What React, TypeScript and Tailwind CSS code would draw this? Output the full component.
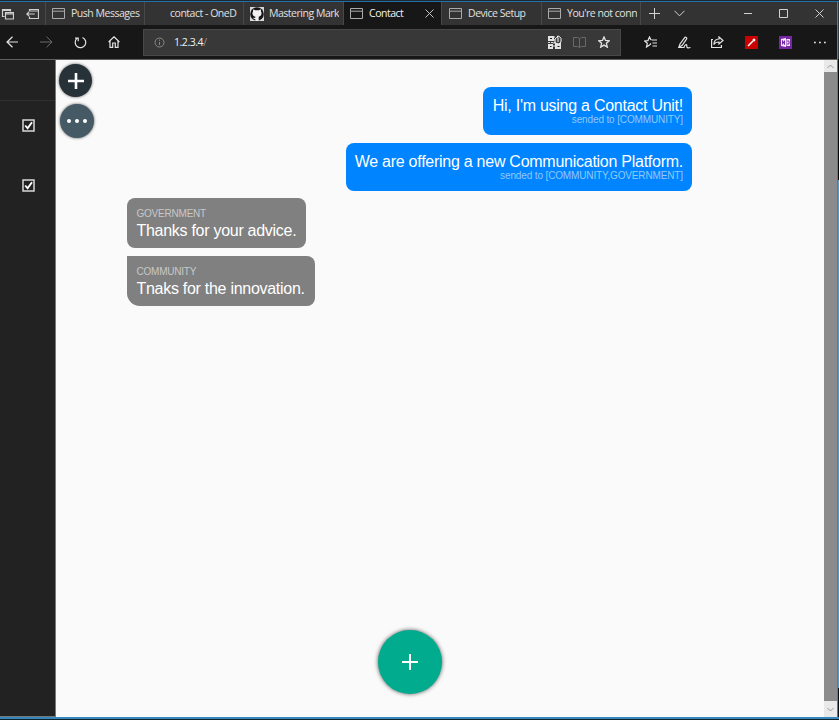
import React from "react";

type P = { className?: string; children: React.ReactNode; w?: number; h?: number; sw?: number };

function Glyph({ className = "", children, w = 16, h = 16, sw = 1 }: P) {
  return (
    <svg
      className={"block shrink-0 " + className}
      width={w}
      height={h}
      viewBox={`0 0 ${w} ${h}`}
      fill="none"
      stroke="currentColor"
      strokeWidth={sw}
    >
      {children}
    </svg>
  );
}

const PageIcon = () => (
  <Glyph w={13} h={11} className="text-[#aaaaaa]">
    <path d="M.5 .5h12v10H.5zM.5 3.2h12" />
  </Glyph>
);

const GitHubIcon = () => (
  <svg className="block shrink-0" width="14" height="14" viewBox="0 0 14 14">
    <rect width="14" height="14" fill="#d8d8d8" />
    <circle cx="7" cy="7" r="6.8" fill="#151515" />
    <path
      d="M3.2 2.2l2 1.1h3.6l2-1.1.2 2.3c1.3 2.6.2 4.8-2.3 5.2V14H5.3v-2H4l-1-1.3 2.3.2V9.700C2.800 9.300 1.700 7.100 3 4.500z"
      fill="#f1f1f1"
    />
  </svg>
);

function Tab({ icon, label, className, active = false }: { icon?: React.ReactNode; label: string; className: string; active?: boolean }) {
  return (
    <div className={"flex h-full shrink-0 items-center overflow-hidden whitespace-nowrap border-r border-[#484848] pl-[6px] text-[10.500px] tracking-[-0.480px] " + className}>
      <div className="flex w-[19px] shrink-0 items-center">{icon}</div>
      <span className={"overflow-hidden " + (active ? "w-[52px] text-[#f4f4f4]" : "w-[70px] text-[#e0e0e0]")}>{label}</span>
      {active && (
        <Glyph w={9} h={9} className="ml-[4px] text-[#c4c4c4]">
          <path d="M.5.5l8 8M8.500.5l-8 8" />
        </Glyph>
      )}
    </div>
  );
}

function TabBar() {
  return (
    <div className="flex h-[23px] w-[837px] bg-[#333333]">
      <div className="flex h-full w-[46px] shrink-0 items-center gap-[12px] border-r border-[#4a4a4a] pl-[1px] text-[#d0d0d0]">
        <Glyph w={13} h={12} sw={1.200}>
          <path d="M3.500 8.500h-2v-7h8v2M4.500 4.500h8v6.500h-8zM1.500 2.500h8M4.500 5.800h8" />
        </Glyph>
        <Glyph w={13} h={10} sw={1.200}>
          <path d="M3.500 2.500v-2h9v9h-9v-2M3.500 2h9M.8 5h8M3 2.800L.8 5 3 7.200" />
        </Glyph>
      </div>
      <Tab icon={<PageIcon />} label="Push Messages" className="w-[99px]" />
      <Tab label="contact - OneD" className="w-[99px]" />
      <Tab icon={<GitHubIcon />} label="Mastering Mark" className="w-[100px]" />
      <Tab icon={<PageIcon />} label="Contact" active className="w-[98px] border-[#171717] bg-[#171717]" />
      <Tab icon={<PageIcon />} label="Device Setup" className="w-[100px] pl-[7px]" />
      <Tab icon={<PageIcon />} label="You're not conn" className="w-[99px]" />
      <div className="flex grow items-center justify-between pr-[13px] pl-[8px] text-[#d2d2d2]">
        <div className="flex items-center gap-[14px]">
          <Glyph w={11} h={11}><path d="M5.500 0v11M0 5.500h11" /></Glyph>
          <Glyph w={11} h={7}><path d="M.5.8l5 5 5-5" /></Glyph>
        </div>
        <div className="flex items-center gap-[27px]">
          <Glyph w={8} h={9}><path d="M0 4.500h8" /></Glyph>
          <Glyph w={9} h={9}><path d="M.5.5h8v8h-8z" /></Glyph>
          <Glyph w={9} h={9}><path d="M.5.5l8 8M8.500.5l-8 8" /></Glyph>
        </div>
      </div>
    </div>
  );
}

function ToolBar() {
  return (
    <div className="flex h-[34px] w-[837px] items-center bg-[#171717] text-[#e4e4e4]">
      <div className="flex w-[143px] shrink-0 items-center pl-[6px]">
        <Glyph w={13} h={12} sw={1.2}><path d="M1 6h11M6.500.7L1 6l5.500 5.300" /></Glyph>
        <Glyph w={13} h={12} className="ml-[21px] text-[#6b6b6b]"><path d="M0 6h12M6.500.7L12 6l-5.500 5.300" /></Glyph>
        <Glyph w={13} h={13} sw={1.2} className="ml-[21px]"><path d="M8.500 1.500A5.300 5.300 0 1 1 3 2.400M1 2.200h3.200v3" /></Glyph>
        <Glyph w={12} h={12} sw={1.2} className="ml-[21px]"><path d="M.6 6L6 .8 11.400 6M2 5v6.400h2.700V7h2.600v4.400H10V5" /></Glyph>
      </div>
      <div className="flex h-[27px] w-[478px] shrink-0 items-center border border-[#484848] bg-[#383838] pr-[10px] pl-[10px]">
        <Glyph w={11} h={11} className="text-[#888888]"><circle cx="5.500" cy="5.500" r="4.500" /><path d="M5.500 5v3M5.500 2.600v1.200" /></Glyph>
        <span className="mt-[1px] ml-[9px] text-[10.500px] tracking-[-0.450px] text-[#f0f0f0]">1.2.3.4<span className="text-[#999999]">/</span></span>
        <div className="ml-auto flex items-center">
          <svg className="block" width="15" height="15" viewBox="0 0 15 15">
            <path d="M1 1h6v5H1zM1 9h5v5H1zM8 8h6v6H8z" fill="#e2e2e2" />
            <path d="M3 3h2v1H3zM3 11h1.500v1H3zM10.500 11h2v1h-2z" fill="#181818" />
            <path d="M1 7.500h8M7 1v12" stroke="#e2e2e2" strokeDasharray="2 1" />
            <path d="M8 7V4l1.500-1.500h1V1l2 .5 1.500 2V7l-2 2-3-.5zM11 2.500V7" stroke="#f1f1f1" fill="#444444" />
          </svg>
          <Glyph w={13} h={12} className="ml-[11px] text-[#686868]"><path d="M.5 1.500h4l2 1 2-1h4v9h-4l-2 1-2-1h-4zM6.500 2.500v9" /></Glyph>
          <Glyph w={12} h={12} sw={1.300} className="ml-[12px]"><path d="M6 1l1.500 3.500 3.700.3-2.800 2.500.9 3.800L6 9.100l-3.300 2 .9-3.800L.8 4.800l3.700-.3z" /></Glyph>
        </div>
      </div>
      <div className="flex grow items-center pl-[23px]">
        <Glyph w={13} h={12} sw={1.200}><path d="M7.500 4H13M8.500 7H13M8.500 10H13M5.500 9L2.500 11l.8-3.700L.7 5l3.300-.4L5.500 1 7 4M7 7.500L5.500 9" /></Glyph>
        <Glyph w={13} h={13} sw={1.200} className="ml-[21px]"><path d="M.8 11.500L2 8l4.500-6.200c1-1.400 3 0 2 1.400L4 9.500.8 11.500H6c.5-3 3-4 2.800-1.500-.2 1.700.7 2.200 3.700 1.500" /></Glyph>
        <Glyph w={13} h={12} sw={1.200} className="ml-[20px]"><path d="M2 3.500H.6v8h9.800V9M8 1l4 3.500L8 8V6C5.500 6 4 6.500 2.800 8.500 3 5 5 3 8 3z" /></Glyph>
        <svg className="ml-[21px] block" width="13" height="13" viewBox="0 0 13 13"><path d="M0 0h13v13H0z" fill="#cb0000" /><path d="M3 10l5-5M8 5l2-2M8 3l2 2" stroke="#fff" strokeWidth="1.500" /></svg>
        <svg className="ml-[21px] block" width="13" height="13" viewBox="0 0 13 13"><path d="M0 0h13v13H0z" fill="#7727a5" /><path d="M2 3l5-1v9L2 10zM7.500 3H11v7H7.500z" fill="#f2e9f8" /><path d="M3.500 8.500v-4l2 4v-4M8 5h2v3H8" stroke="#7727a5" fill="none" /></svg>
        <Glyph w={12} h={3} className="ml-[22px]"><path d="M0 1.500h1.800M5 1.500h1.800M10 1.500h1.800" strokeWidth="1.600" /></Glyph>
      </div>
    </div>
  );
}

const Check = ({ className }: { className: string }) => (
  <svg className={"block " + className} width="13" height="13" viewBox="0 0 13 13" fill="none">
    <path d="M1 1h11v11H1z" stroke="#d7d7d7" strokeWidth="1.500" />
    <path d="M3.200 6.500l2.400 2.800L10 3.200" stroke="#fff" strokeWidth="1.900" />
  </svg>
);

function Sent({ text, to, className }: { text: string; to: string; className: string }) {
  return (
    <div className={"flex h-[48px] flex-col items-end self-end rounded-[8px] bg-[#0084ff] pt-[10px] pr-[9px] whitespace-nowrap text-white " + className}>
      <span className="text-[16px] leading-[18px] tracking-[-0.260px]">{text}</span>
      <span className="text-[10px] leading-[10px] tracking-[-0.130px] text-[#91c9fa]">{to}</span>
    </div>
  );
}

function Received({ text, from, className }: { text: string; from: string; className: string }) {
  return (
    <div className={"flex h-[50px] flex-col self-start bg-[#808080] pt-[10px] pl-[9.500px] whitespace-nowrap text-white " + className}>
      <span className="text-[10px] leading-[12px] tracking-[-0.220px] text-[#c8c8c8]">{from}</span>
      <span className="text-[16px] leading-[22px] tracking-[-0.280px]">{text}</span>
    </div>
  );
}

export default function App() {
  return (
    <div className="flex h-[720px] w-[839px] flex-col overflow-hidden bg-[#17212b] font-['Open_Sans','Noto_Sans',sans-serif]">
      <div className="h-[2px] shrink-0 border-t border-[#20282f] bg-[#2370a8]" />
      <div className="flex h-[715px]">
        <div className="flex w-[837px] shrink-0 flex-col">
          <TabBar />
          <ToolBar />
          <div className="h-px bg-[#606060]" />
          <div className="flex h-[657px]">
            <aside className="flex w-[56px] shrink-0 flex-col border-r border-b border-[#777777] bg-[#222222]">
              <div className="h-[41px] shrink-0 border-b border-[#303030]" />
              <Check className="mt-[18px] ml-[22px]" />
              <Check className="mt-[47px] ml-[22px]" />
            </aside>
            <main className="flex w-[768px] shrink-0 bg-[#fafafa] font-['Liberation_Sans',Arial,sans-serif]">
              <div className="flex w-[71px] shrink-0 flex-col pt-[4px] pl-[3px]">
                <div className="flex size-[33px] items-center justify-center rounded-full bg-[#263238] text-white shadow-[0_0_3px_#555555]">
                  <Glyph w={16} h={16} sw={2.600}><path d="M8 0v16M0 8h16" /></Glyph>
                </div>
                <div className="mt-[7px] ml-[1px] flex size-[34px] items-center justify-center gap-[4px] rounded-full bg-[#455a64] shadow-[0_0_3px_#555555]">
                  <i className="size-[4px] rounded-full bg-white" />
                  <i className="size-[4px] rounded-full bg-white" />
                  <i className="size-[4px] rounded-full bg-white" />
                </div>
              </div>
              <div className="flex w-[565px] flex-col gap-[8px] pt-[27px]">
                <Sent className="w-[209px]" text="Hi, I'm using a Contact Unit!" to="sended to [COMMUNITY]" />
                <Sent className="w-[346.500px]" text="We are offering a new Communication Platform." to="sended to [COMMUNITY,GOVERNMENT]" />
                <Received className="-mt-px w-[179px] rounded-[8px]" from="GOVERNMENT" text="Thanks for your advice." />
                <Received className="w-[188px] rounded-tr-[8px] rounded-br-[8px] rounded-bl-[13px]" from="COMMUNITY" text="Tnaks for the innovation." />
                <div className="mt-auto mb-[23px] ml-[251px] flex size-[64px] items-center justify-center rounded-full bg-[#00ab8e] text-white shadow-[0_0_4px_#555555]">
                  <Glyph w={16} h={16} sw={2}><path d="M8 0v16M0 8h16" /></Glyph>
                </div>
              </div>
            </main>
            <div className="flex w-[13px] shrink-0 flex-col items-center bg-[#e9e9e9] text-[#999999]">
              <div className="flex h-[12px] items-center"><Glyph w={7} h={5}><path d="M.5 4l3-3 3 3" /></Glyph></div>
              <div className="w-full grow bg-[#8b8b8b]" />
              <div className="flex h-[16px] items-center"><Glyph w={7} h={5}><path d="M.5 1l3 3 3-3" /></Glyph></div>
            </div>
          </div>
        </div>
        <div className="flex w-[2px] shrink-0 flex-col border-l border-[#3585bf]">
          <div className="h-[57px] bg-[#303b44]" />
          <div className="h-[121px] bg-[#050809]" />
          <div className="h-[508px] bg-[#5798c5]" />
          <div className="grow bg-[#071018]" />
        </div>
      </div>
      <div className="h-[2px] shrink-0 bg-[#3587c0]" />
      <div className="h-px bg-[#14202a]" />
    </div>
  );
}
